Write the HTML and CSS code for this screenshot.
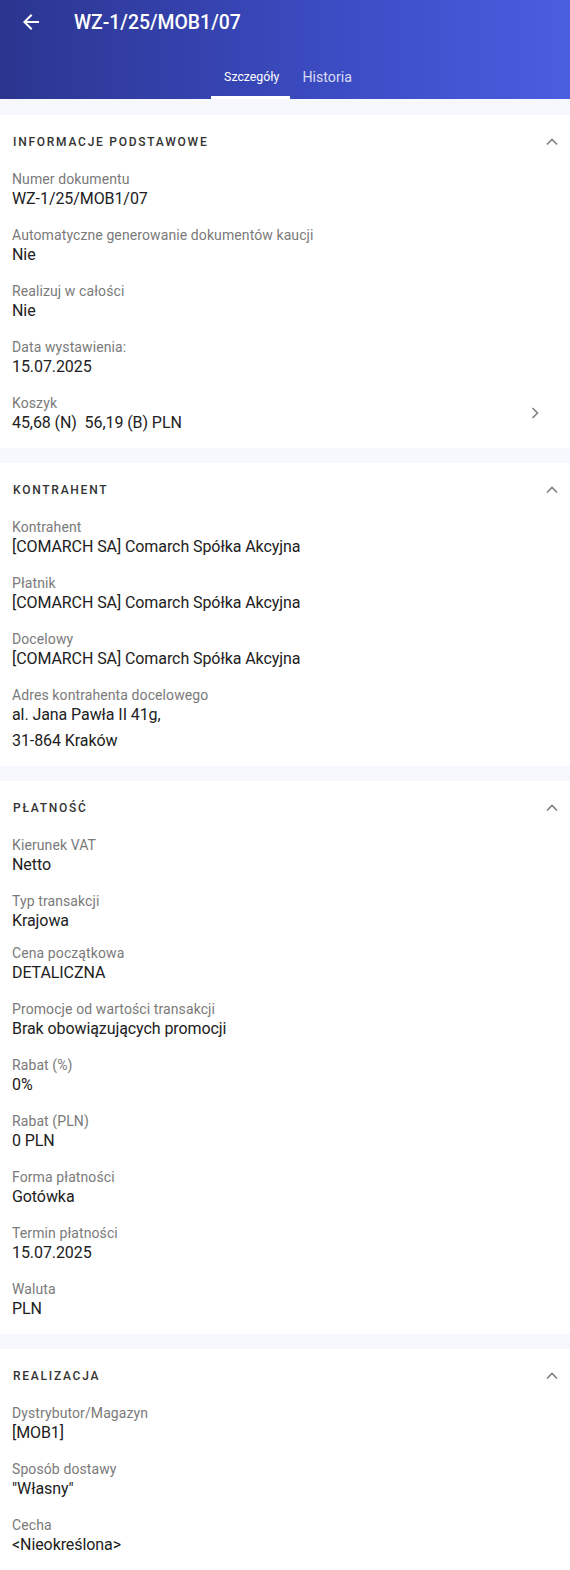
FILE: index.html
```html
<!DOCTYPE html>
<html lang="pl">
<head>
  <meta charset="UTF-8" />
  <meta name="viewport" content="width=device-width, initial-scale=1.0"/>
  <title>WZ-1/25/MOB1/07</title>
  <link rel="stylesheet" href="styles.css">
</head>
<body>

  <header class="appbar">
    <div class="toolbar">
      <button class="back" aria-label="Wstecz">
        <svg width="24" height="24" viewBox="0 0 24 24"><path d="M20 11H7.83l5.59-5.59L12 4l-8 8 8 8 1.41-1.41L7.83 13H20v-2z" fill="#fff"/></svg>
      </button>
      <h1 class="title">WZ-1/25/MOB1/07</h1>
    </div>
    <nav class="tabs">
      <a class="tab active" href="#">Szczegóły</a>
      <a class="tab" href="#">Historia</a>
    </nav>
  </header>

  <main class="content">
    <section class="card">
      <div class="card-head">
        <h2>Informacje podstawowe</h2>
        <svg class="chev" width="14" height="10" viewBox="0 0 14 10"><path d="M2 7.5 7 2.5l5 5" fill="none" stroke="#808080" stroke-width="1.6"/></svg>
      </div>
      <div class="field"><div class="label">Numer dokumentu</div><div class="value">WZ-1/25/MOB1/07</div></div>
      <div class="field"><div class="label">Automatyczne generowanie dokumentów kaucji</div><div class="value">Nie</div></div>
      <div class="field"><div class="label">Realizuj w całości</div><div class="value">Nie</div></div>
      <div class="field"><div class="label">Data wystawienia:</div><div class="value">15.07.2025</div></div>
      <div class="field link">
        <div>
          <div class="label">Koszyk</div>
          <div class="value">45,68 (N)&nbsp; 56,19 (B) PLN</div>
        </div>
        <svg width="10" height="14" viewBox="0 0 10 14"><path d="M2.5 2 7.5 7l-5 5" fill="none" stroke="#808080" stroke-width="1.6"/></svg>
      </div>
    </section>

    <section class="card">
      <div class="card-head">
        <h2>Kontrahent</h2>
        <svg class="chev" width="14" height="10" viewBox="0 0 14 10"><path d="M2 7.5 7 2.5l5 5" fill="none" stroke="#808080" stroke-width="1.6"/></svg>
      </div>
      <div class="field"><div class="label">Kontrahent</div><div class="value">[COMARCH SA] Comarch Spółka Akcyjna</div></div>
      <div class="field"><div class="label">Płatnik</div><div class="value">[COMARCH SA] Comarch Spółka Akcyjna</div></div>
      <div class="field"><div class="label">Docelowy</div><div class="value">[COMARCH SA] Comarch Spółka Akcyjna</div></div>
      <div class="field"><div class="label">Adres kontrahenta docelowego</div><div class="value">al. Jana Pawła II 41g,</div><div class="value second">31-864 Kraków</div></div>
    </section>

    <section class="card">
      <div class="card-head">
        <h2>Płatność</h2>
        <svg class="chev" width="14" height="10" viewBox="0 0 14 10"><path d="M2 7.5 7 2.5l5 5" fill="none" stroke="#808080" stroke-width="1.6"/></svg>
      </div>
      <div class="field"><div class="label">Kierunek VAT</div><div class="value">Netto</div></div>
      <div class="field"><div class="label">Typ transakcji</div><div class="value">Krajowa</div></div>
      <div class="field tight"><div class="label">Cena początkowa</div><div class="value">DETALICZNA</div></div>
      <div class="field"><div class="label">Promocje od wartości transakcji</div><div class="value">Brak obowiązujących promocji</div></div>
      <div class="field"><div class="label">Rabat (%)</div><div class="value">0%</div></div>
      <div class="field"><div class="label">Rabat (PLN)</div><div class="value">0 PLN</div></div>
      <div class="field"><div class="label">Forma płatności</div><div class="value">Gotówka</div></div>
      <div class="field"><div class="label">Termin płatności</div><div class="value">15.07.2025</div></div>
      <div class="field"><div class="label">Waluta</div><div class="value">PLN</div></div>
    </section>

    <section class="card">
      <div class="card-head">
        <h2>Realizacja</h2>
        <svg class="chev" width="14" height="10" viewBox="0 0 14 10"><path d="M2 7.5 7 2.5l5 5" fill="none" stroke="#808080" stroke-width="1.6"/></svg>
      </div>
      <div class="field"><div class="label">Dystrybutor/Magazyn</div><div class="value">[MOB1]</div></div>
      <div class="field"><div class="label">Sposób dostawy</div><div class="value">"Własny"</div></div>
      <div class="field"><div class="label">Cecha</div><div class="value">&lt;Nieokreślona&gt;</div></div>
    </section>
  </main>

</body>
</html>
```

FILE: styles.css
```css
* {
  margin: 0;
  padding: 0;
  box-sizing: border-box;
}

body {
  font-family: Roboto, 'Noto Sans', sans-serif;
  background: #f7f8fd;
  color: #212121;
}

.appbar {
  height: 99px;
  background: linear-gradient(90deg, #2b358f 0%, #3c4cc4 60%, #4a5ee0 100%);
  color: #fff;
}

.toolbar {
  height: 44px;
  display: flex;
  align-items: center;
  padding-left: 19px;
}

.back {
  width: 24px;
  height: 24px;
  border: 0;
  background: none;
  display: flex;
}

.title {
  margin-left: 31px;
  font-size: 19.4px;
  font-weight: 500;
}

.tabs {
  display: flex;
  justify-content: center;
  margin-top: 5px;
  padding-left: 5px;
}

.tab {
  display: block;
  padding: 18px 12px 9px;
  line-height: 20px;
  font-size: 14.2px;
  color: rgba(255, 255, 255, 0.82);
  text-decoration: none;
  border-bottom: 3px solid transparent;
}

.tab.active {
  padding: 18px 11px 9px 13px;
  font-size: 12.3px;
  color: #fff;
  border-bottom-color: #fff;
}

.content {
  padding-top: 16px;
}

.card {
  background: #fff;
  padding: 0 12px 7px;
  margin-bottom: 15px;
}

.card-head {
  height: 46px;
  display: flex;
  align-items: center;
  justify-content: space-between;
  padding-left: 1px;
  padding-top: 8px;
}

.card-head h2 {
  font-size: 12px;
  font-weight: 500;
  letter-spacing: 1.75px;
  text-transform: uppercase;
  color: #333;
}

.chev {
  margin-right: -1px;
}

.field {
  padding: 8px 0;
}

.field.tight {
  padding-top: 4px;
}

.field.link {
  display: flex;
  align-items: center;
  justify-content: space-between;
  padding-right: 18px;
}

.label {
  font-size: 14px;
  line-height: 20px;
  color: #7a7a7a;
  letter-spacing: 0.1px;
}

.value {
  font-size: 16px;
  line-height: 20px;
  color: #212121;
  letter-spacing: -0.08px;
}

.value.second {
  margin-top: 6px;
}
```
